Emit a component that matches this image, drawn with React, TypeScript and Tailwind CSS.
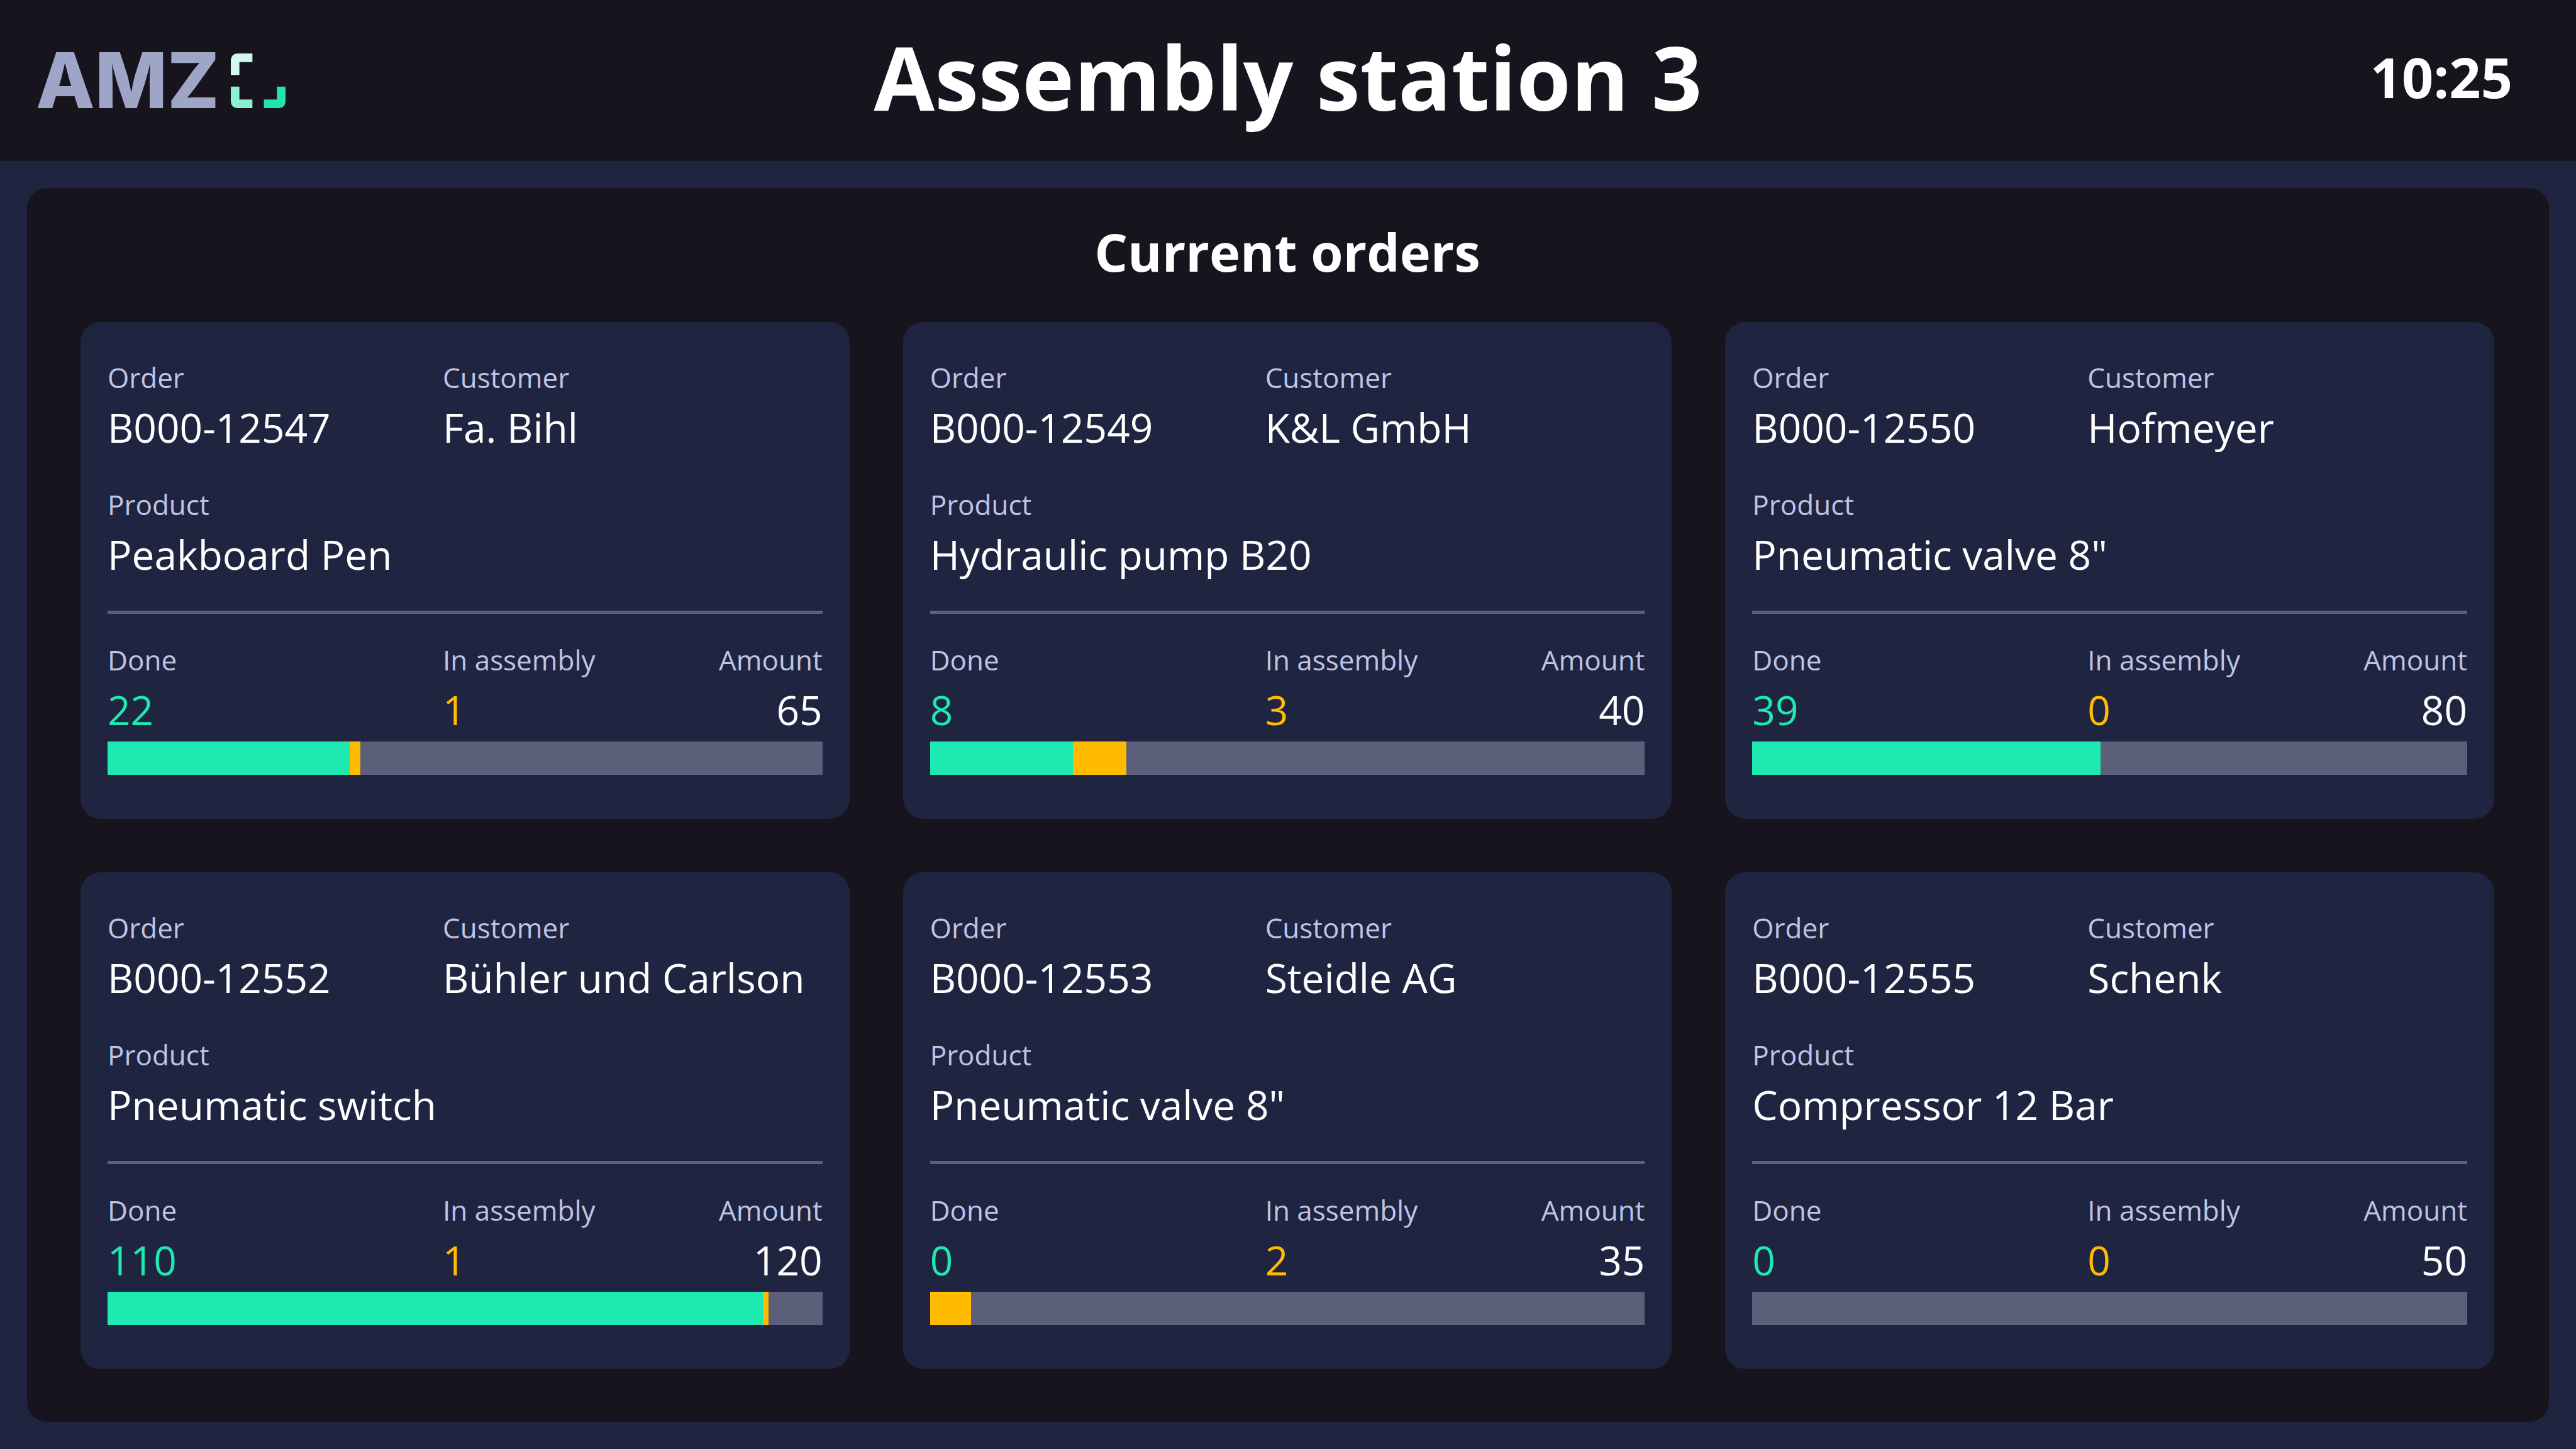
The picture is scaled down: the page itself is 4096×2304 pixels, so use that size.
import React from "react";

type Order = {
  id: string;
  customer: string;
  product: string;
  done: number;
  inAssembly: number;
  amount: number;
};

const orders: Order[] = [
  { id: "B000-12547", customer: "Fa. Bihl", product: "Peakboard Pen", done: 22, inAssembly: 1, amount: 65 },
  { id: "B000-12549", customer: "K&L GmbH", product: "Hydraulic pump B20", done: 8, inAssembly: 3, amount: 40 },
  { id: "B000-12550", customer: "Hofmeyer", product: 'Pneumatic valve 8"', done: 39, inAssembly: 0, amount: 80 },
  { id: "B000-12552", customer: "Bühler und Carlson", product: "Pneumatic switch", done: 110, inAssembly: 1, amount: 120 },
  { id: "B000-12553", customer: "Steidle AG", product: 'Pneumatic valve 8"', done: 0, inAssembly: 2, amount: 35 },
  { id: "B000-12555", customer: "Schenk", product: "Compressor 12 Bar", done: 0, inAssembly: 0, amount: 50 },
];

function Logo() {
  return (
    <div className="flex items-center gap-[18px] pt-[12px] pl-[57px]">
      <span className="font-['Inter',sans-serif] text-[122px] leading-[120px] font-extrabold text-[#9fa5c6]">AMZ</span>
      <svg viewBox="0 0 100 100" className="size-[87px]" aria-hidden="true">
        <path fill="#d0f9ec" d="M0 39.5V12A12 12 0 0 1 12 0H39.5V15.7H15.7V39.5Z" />
        <path fill="#8af0d3" d="M0 60.5V88A12 12 0 0 0 12 100H39.5V84.3H15.7V60.5Z" />
        <path fill="#24e3ab" d="M84.3 60.5H100V88A12 12 0 0 1 88 100H60.5V84.3H84.3Z" />
      </svg>
    </div>
  );
}

function Field({ label, value, valueClass = "text-white" }: { label: string; value: string | number; valueClass?: string }) {
  return (
    <div className="flex flex-col gap-[8px] whitespace-nowrap">
      <dt className="text-[44px] leading-[64px] text-[#c0c4e4]">{label}</dt>
      <dd className={`text-[64px] leading-[80px] ${valueClass}`}>{value}</dd>
    </div>
  );
}

function OrderCard({ order }: { order: Order }) {
  const share = (n: number) => `${(n / order.amount) * 100}%`;
  return (
    <article className="flex flex-col rounded-[32px] bg-[#1f2440] px-[43px] pt-[56px] pb-[70px]">
      <dl className="grid grid-cols-[533px_1fr] gap-y-[50px]">
        <Field label="Order" value={order.id} />
        <Field label="Customer" value={order.customer} />
        <Field label="Product" value={order.product} />
      </dl>
      <hr className="mt-[49px] h-[5px] border-0 bg-[#5b5f7a]" />
      <dl className="mt-[41px] grid grid-cols-[533px_1fr_auto]">
        <Field label="Done" value={order.done} valueClass="text-[#1de9b0]" />
        <Field label="In assembly" value={order.inAssembly} valueClass="text-[#ffbb00]" />
        <div className="text-right">
          <Field label="Amount" value={order.amount} />
        </div>
      </dl>
      <div
        role="img"
        aria-label={`${order.done} done and ${order.inAssembly} in assembly of ${order.amount}`}
        className="mt-[10px] flex h-[53px] bg-[#5b5f7a]"
      >
        <div className="bg-[#1de9b0]" style={{ width: share(order.done) }} />
        <div className="bg-[#ffbb00]" style={{ width: share(order.inAssembly) }} />
      </div>
    </article>
  );
}

export default function App() {
  return (
    <div className="flex min-h-screen flex-col bg-[#1f2440] font-['Open_Sans','Noto_Sans',sans-serif] text-white">
      <header className="grid grid-cols-[1fr_auto_1fr] items-center bg-[#17141e] pt-[22px] pb-[34px]">
        <Logo />
        <h1 className="text-[140px] leading-[200px] font-bold">Assembly station 3</h1>
        <time className="pr-[101px] text-right text-[88px] leading-[120px] font-bold">10:25</time>
      </header>
      <main className="m-[43px] flex flex-1 flex-col rounded-[32px] bg-[#17141e] pt-[41px] pr-[87px] pb-[84px] pl-[85px]">
        <h2 className="text-center text-[83px] leading-[120px] font-bold">Current orders</h2>
        <div className="mt-[52px] grid grid-cols-3 gap-[85px]">
          {orders.map((order) => (
            <OrderCard key={order.id} order={order} />
          ))}
        </div>
      </main>
    </div>
  );
}
